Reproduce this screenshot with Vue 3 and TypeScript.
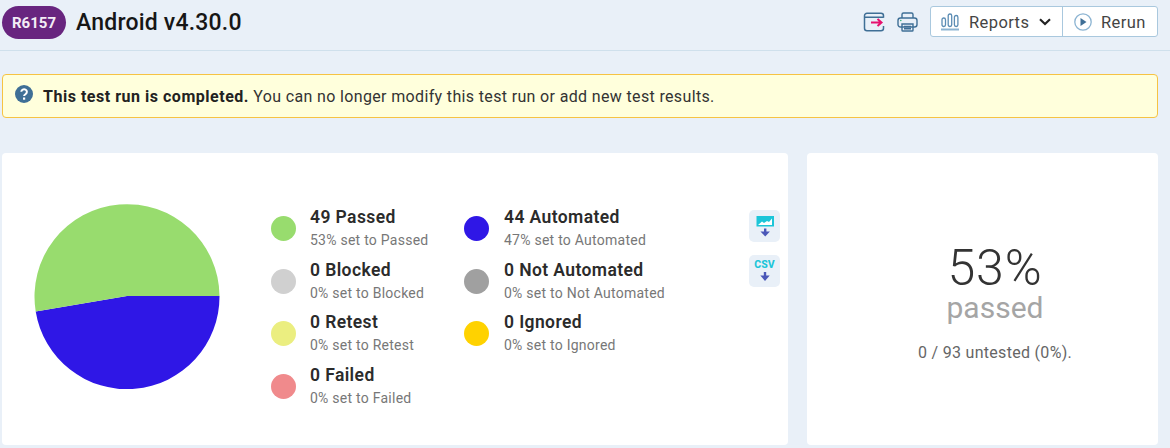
<script setup lang="ts">
interface Item { title: string; sub: string; color: string }
const col1: Item[] = [
  { title: '49 Passed', sub: '53% set to Passed', color: '#98dc6e' },
  { title: '0 Blocked', sub: '0% set to Blocked', color: '#d0d0d0' },
  { title: '0 Retest', sub: '0% set to Retest', color: '#ebee80' },
  { title: '0 Failed', sub: '0% set to Failed', color: '#f08a8c' },
]
const col2: Item[] = [
  { title: '44 Automated', sub: '47% set to Automated', color: '#2f17e6' },
  { title: '0 Not Automated', sub: '0% set to Not Automated', color: '#a0a0a0' },
  { title: '0 Ignored', sub: '0% set to Ignored', color: '#ffd200' },
]
const columns = [col1, col2]
</script>

<template>
  <div class="page">
    <header class="head">
      <div class="head-left">
        <span class="badge">R6157</span>
        <h1 class="name">Android v4.30.0</h1>
      </div>
      <div class="head-right">
        <svg class="ico" viewBox="0 0 22 20" width="22" height="20" fill="none">
          <path d="M20.500 5.700V3.700A2.500 2.500 0 0 0 18 1.200H4A2.500 2.500 0 0 0 1.500 3.700v12.600a2.500 2.500 0 0 0 2.500 2.500h14a2.500 2.500 0 0 0 2.500-2.500V14M1.500 5.200h19" stroke="#3f6f96" stroke-width="1.500"/>
          <path d="M8 10.500h10M14.500 7l4 3.500-4 3.500" stroke="#e6106e" stroke-width="2"/>
        </svg>
        <svg class="ico ico2" viewBox="0 0 21 20" width="21" height="20" fill="none" stroke="#3f6f96" stroke-width="1.400">
          <path d="M5 6V2.500A1.500 1.500 0 0 1 6.500 1h8A1.500 1.500 0 0 1 16 2.500V6"/>
          <rect x="1" y="6" width="19" height="9" rx="2.500"/>
          <path d="M5 12h11v6.200a.8.8 0 0 1-.8.8H5.800a.8.800 0 0 1-.8-.8zM7 14.500h7M7 16.800h7"/>
          <circle cx="3.800" cy="8.500" r=".8" fill="#2fb37a" stroke="none"/>
        </svg>
        <div class="btns">
          <button class="btn reports">
            <svg viewBox="0 0 18 20" width="18" height="20" fill="none" stroke="#5c8db4" stroke-width="1.300">
              <rect x="1" y="6" width="3.500" height="8.500" rx="1.700"/>
              <rect x="7.200" y="2" width="3.500" height="12.500" rx="1.700"/>
              <rect x="13.400" y="3.500" width="3.500" height="11" rx="1.700"/>
              <path d="M0 17.500h18" stroke="#8cb4d2" stroke-width="2"/>
            </svg>
            <span class="lbl">Reports</span>
            <svg class="chev" viewBox="0 0 12 8" width="12" height="8" fill="none" stroke="#222" stroke-width="2.200">
              <path d="M1 1.300l5 4.700 5-4.700"/>
            </svg>
          </button>
          <button class="btn rerun">
            <svg viewBox="0 0 18 18" width="18" height="18" fill="none">
              <circle cx="9" cy="9" r="8.200" stroke="#8cb4d2" stroke-width="1.300"/>
              <path d="M6.500 5l6 4-6 4z" fill="#3f6f96"/>
            </svg>
            <span class="lbl">Rerun</span>
          </button>
        </div>
      </div>
    </header>

    <div class="alert">
      <svg class="help" viewBox="0 0 18 18" width="18" height="18">
        <circle cx="9" cy="9" r="9" fill="#3f6f96"/>
        <path d="M6.300 6.800a2.800 2.600 0 1 1 4.300 2.300c-1 .7-1.500 1-1.500 2" fill="none" stroke="#fff" stroke-width="2"/>
        <rect x="8" y="12.500" width="2.200" height="2.200" fill="#fff"/>
      </svg>
      <p class="alert-text"><b>This test run is completed.</b> You can no longer modify this test run or add new test results.</p>
    </div>

    <main class="cards">
      <section class="card chart-card">
        <svg class="pie" viewBox="0 0 186 186" width="186" height="186">
          <path d="M93 93H185.500A92.500 92.500 0 0 1 1.700 108.500z" fill="#2f17e6"/>
          <path d="M93 93H185.500A92.500 92.500 0 1 0 1.700 108.500z" fill="#98dc6e"/>
        </svg>
        <div class="legend">
          <div v-for="(col, i) in columns" :key="i" class="col" :class="{ second: i === 1 }">
            <div v-for="it in col" :key="it.title" class="row">
              <span class="dot" :style="{ background: it.color }"></span>
              <div>
                <div class="title">{{ it.title }}</div>
                <div class="sub">{{ it.sub }}</div>
              </div>
            </div>
          </div>
        </div>
        <div class="downloads">
          <div class="dl">
            <svg viewBox="0 0 22 24" width="22" height="24">
              <rect x="2.500" y="2" width="17.500" height="10.500" fill="#1cc5d8"/>
              <path d="M4 11l4-3.500 2 1.500 3-2 2 1 3-3.500V11z" fill="#fff"/>
              <path d="M11.200 14.500v6" fill="none" stroke="#4a57b8" stroke-width="2.400"/>
              <path d="M6.500 17.500h9.400l-4.700 5z" fill="#4a57b8"/>
            </svg>
          </div>
          <div class="dl">
            <span class="csv">CSV</span>
            <svg viewBox="0 0 22 12" width="22" height="12">
              <path d="M11 1v5" fill="none" stroke="#4a57b8" stroke-width="2.400"/>
              <path d="M6.300 4.500h9.400L11 10z" fill="#4a57b8"/>
            </svg>
          </div>
        </div>
      </section>
      <section class="card stat-card">
        <div class="pct">53%</div>
        <div class="passed">passed</div>
        <div class="untested">0 / 93 untested (0%).</div>
      </section>
    </main>
  </div>
</template>

<style>
html, body { margin: 0; background: #e9f0f8; }
</style>

<style scoped>
.page {
  width: 1170px;
  height: 448px;
  overflow: hidden;
  background: #e9f0f8;
  font-family: Roboto, "Liberation Sans", sans-serif;
  color: #222;
}
.head {
  height: 50px;
  box-sizing: content-box;
  border-bottom: 1px solid #cfe0ec;
  display: flex;
  justify-content: space-between;
  align-items: flex-start;
  padding: 0 12px 0 2px;
}
.head-left { display: flex; align-items: center; gap: 10px; margin-top: 6px; }
.badge {
  width: 64px;
  height: 33px;
  border-radius: 17px;
  background: #68257f;
  color: #f3edf6;
  font-size: 15px;
  font-weight: 700;
  display: flex;
  align-items: center;
  justify-content: center;
}
.name { margin: 0; font-size: 23px; font-weight: 500; color: #161616; letter-spacing: .2px; }
.head-right { display: flex; align-items: center; margin-top: 6px; }
.ico2 { margin-left: 12px; }
.ico { display: block; }
.btns {
  display: flex;
  height: 29px;
  margin-left: 12px;
  background: #fff;
  border: 1px solid #a9c8de;
  border-radius: 3px;
}
.btn {
  border: 0;
  padding: 0;
  background: none;
  font: inherit;
  font-size: 16.500px;
  color: #444;
  display: flex;
  align-items: center;
  letter-spacing: .4px;
}
.lbl { position: relative; top: 1px; }
.reports { width: 132px; padding-left: 10px; gap: 10px; box-sizing: border-box; border-right: 1px solid #a9c8de; }
.rerun { width: 94px; padding-left: 11px; gap: 9px; box-sizing: border-box; }
.alert {
  margin: 23px 12px 0 2px;
  height: 44px;
  box-sizing: border-box;
  background: #ffffdc;
  border: 1px solid #f6c343;
  border-radius: 4px;
  display: flex;
  align-items: center;
  padding: 0 0 0 12px;
  gap: 10px;
}
.help { margin-top: -4px; }
.alert-text { margin: 0; font-size: 16px; letter-spacing: .35px; color: #333; padding-top: 1px; }
.alert-text b { font-weight: 700; color: #222; letter-spacing: .52px; }
.cards { display: flex; gap: 19px; margin: 35px 12px 0 2px; }
.card { background: #fff; border-radius: 4px; height: 292px; box-sizing: border-box; }
.chart-card {
  width: 786px;
  display: flex;
  align-items: flex-start;
  padding: 50px 0 0 32px;
  position: relative;
}
.legend { display: flex; margin-left: 51px; }
.col { width: 193px; white-space: nowrap; }
.row { display: flex; height: 52.700px; gap: 14px; align-items: center; }
.second .row { gap: 15px; }
.dot { width: 25px; height: 25px; border-radius: 50%; flex: none; margin-bottom: 2px; }
.title { font-size: 17.500px; font-weight: 600; letter-spacing: .4px; color: #2b2b2b; line-height: 22px; margin-top: -1px; }
.sub { font-size: 14px; letter-spacing: .25px; color: #777; line-height: 24px; }
.downloads { position: absolute; left: 747px; top: 57px; display: flex; flex-direction: column; gap: 13px; }
.dl {
  width: 31px;
  height: 32px;
  border-radius: 5px;
  background: #e9f0f8;
  display: flex;
  flex-direction: column;
  align-items: center;
  justify-content: center;
}
.csv { font-size: 10.500px; font-weight: 800; line-height: 12px; color: #1cc5d8; }
.stat-card {
  width: 351px;
  display: flex;
  flex-direction: column;
  align-items: center;
  padding: 89px 0 0 25px;
}
.pct { font-size: 50px; font-weight: 300; color: #333; line-height: 52px; letter-spacing: .8px; }
.passed { font-size: 30px; font-weight: 400; color: #a5a5a5; line-height: 28px; }
.untested { font-size: 16px; letter-spacing: .3px; color: #666; margin-top: 21px; line-height: 19px; }
</style>
